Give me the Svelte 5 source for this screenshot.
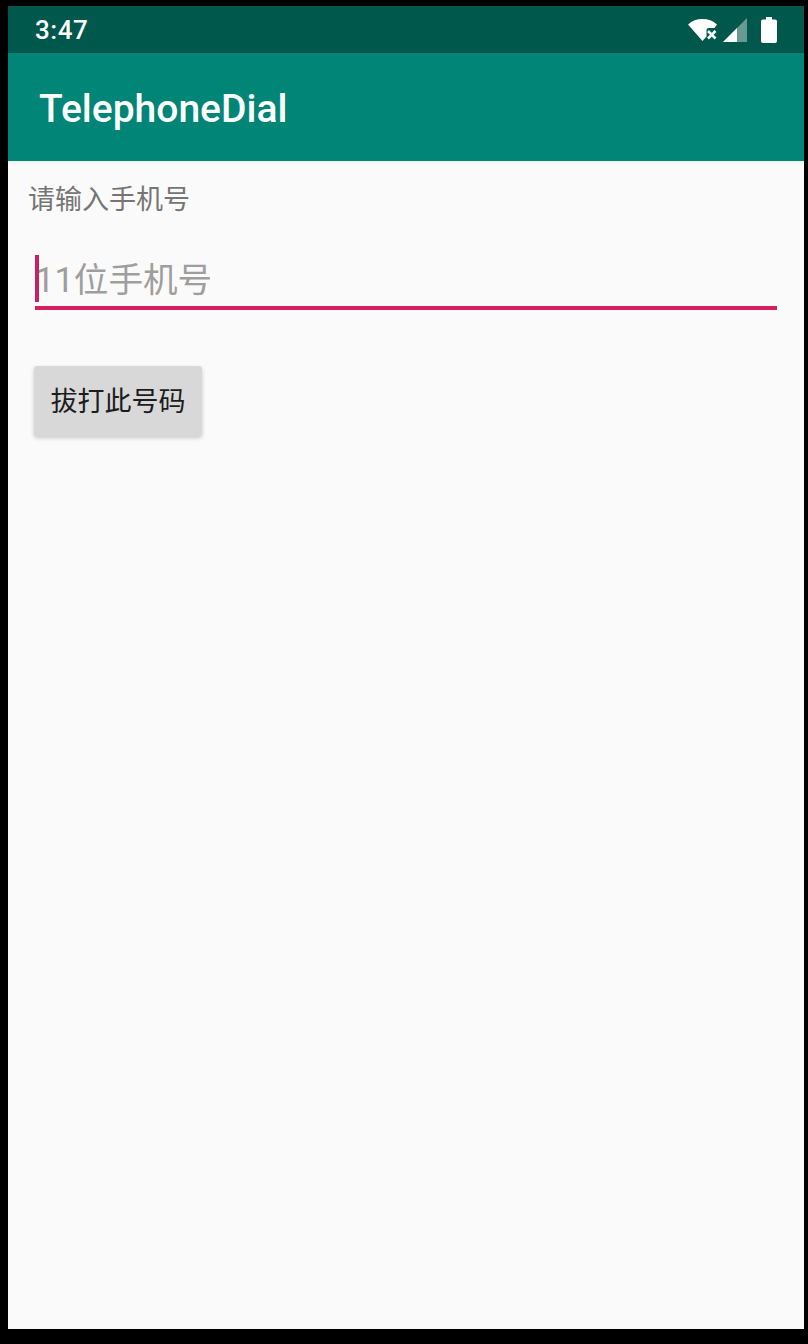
<script>
  let phone = "";
</script>

<div class="device">
  <div class="screen">
    <div class="status">
      <span class="time">3:47</span>
      <div class="icons">
        <svg class="wifi" width="32" height="24" viewBox="0 0 32 24">
          <path d="M1 6.500C5 2.800 10 1 15.500 1S26 2.800 30 6.500L27.500 10H21.500a2 2 0 0 0-2 2v6.500l-4 4.500z" fill="#fff" />
          <path d="M21 13l7.500 7.500M28.500 13L21 20.500" stroke="#fff" stroke-width="2.600" fill="none" />
        </svg>
        <svg class="signal" width="24" height="24" viewBox="0 0 24 24">
          <path d="M0 24L24 0v24z" fill="#fff" fill-opacity="0.4" />
          <path d="M0 24L14 10v14z" fill="#fff" />
        </svg>
        <svg class="battery" width="16" height="26" viewBox="0 0 16 26">
          <path d="M5 0h6v2.500h3a2 2 0 0 1 2 2V24a2 2 0 0 1-2 2H2a2 2 0 0 1-2-2V4.500a2 2 0 0 1 2-2h3z" fill="#fff" />
        </svg>
      </div>
    </div>
    <header class="toolbar">TelephoneDial</header>
    <main class="content">
      <p class="label">请输入手机号</p>
      <div class="field">
        <span class="caret"></span>
        <input type="text" placeholder="11位手机号" bind:value={phone} />
      </div>
      <button type="button">拔打此号码</button>
    </main>
  </div>
</div>

<style>
  :global(body) {
    background: #000;
  }

  .device {
    height: 1344px;
    box-sizing: border-box;
    padding: 6px 4px 15px 8px;
    background: #000;
  }

  .screen {
    height: 100%;
    display: flex;
    flex-direction: column;
    background: #fafafa;
    font-family: Roboto, "Noto Sans CJK SC", sans-serif;
  }

  .status {
    height: 47px;
    flex: none;
    display: flex;
    align-items: center;
    justify-content: space-between;
    padding: 0 27px;
    box-sizing: border-box;
    background: #00574b;
    color: #fff;
  }

  .time {
    font-size: 26px;
    font-weight: 500;
    letter-spacing: 0.5px;
  }

  .icons {
    display: flex;
    align-items: center;
    gap: 4px;
  }

  .battery {
    margin-left: 10px;
  }

  .toolbar {
    height: 108px;
    flex: none;
    box-sizing: border-box;
    padding: 4px 31px 0;
    display: flex;
    align-items: center;
    background: #008577;
    color: #fff;
    font-size: 39px;
    font-weight: 500;
    box-shadow: 0 1px 3px rgba(0, 0, 0, 0.08);
  }

  .content {
    flex: 1;
    padding: 22px 27px 0 20px;
  }

  .label {
    margin: 0;
    font-size: 27px;
    line-height: 34px;
    color: #757575;
  }

  .field {
    position: relative;
    margin: 32px 0 0 7px;
    height: 57px;
    display: flex;
    border-bottom: 4px solid #d4205f;
  }

  .caret {
    position: absolute;
    left: 0;
    top: 6px;
    width: 4px;
    height: 47px;
    background: #c9205f;
  }

  input {
    width: 100%;
    padding: 5px 0 0;
    border: 0;
    outline: 0;
    background: transparent;
    font-family: inherit;
    font-size: 34.6px;
    color: #212121;
  }

  input::placeholder {
    color: #9e9e9e;
    opacity: 1;
  }

  button {
    display: block;
    width: 168px;
    height: 70px;
    margin: 56px 0 0 6px;
    padding: 0 0 4px;
    border: 0;
    border-radius: 3px;
    background: #d8d8d8;
    box-shadow: 0 2px 4px rgba(0, 0, 0, 0.2);
    font-family: inherit;
    font-size: 27px;
    color: #1c1c1c;
  }
</style>
